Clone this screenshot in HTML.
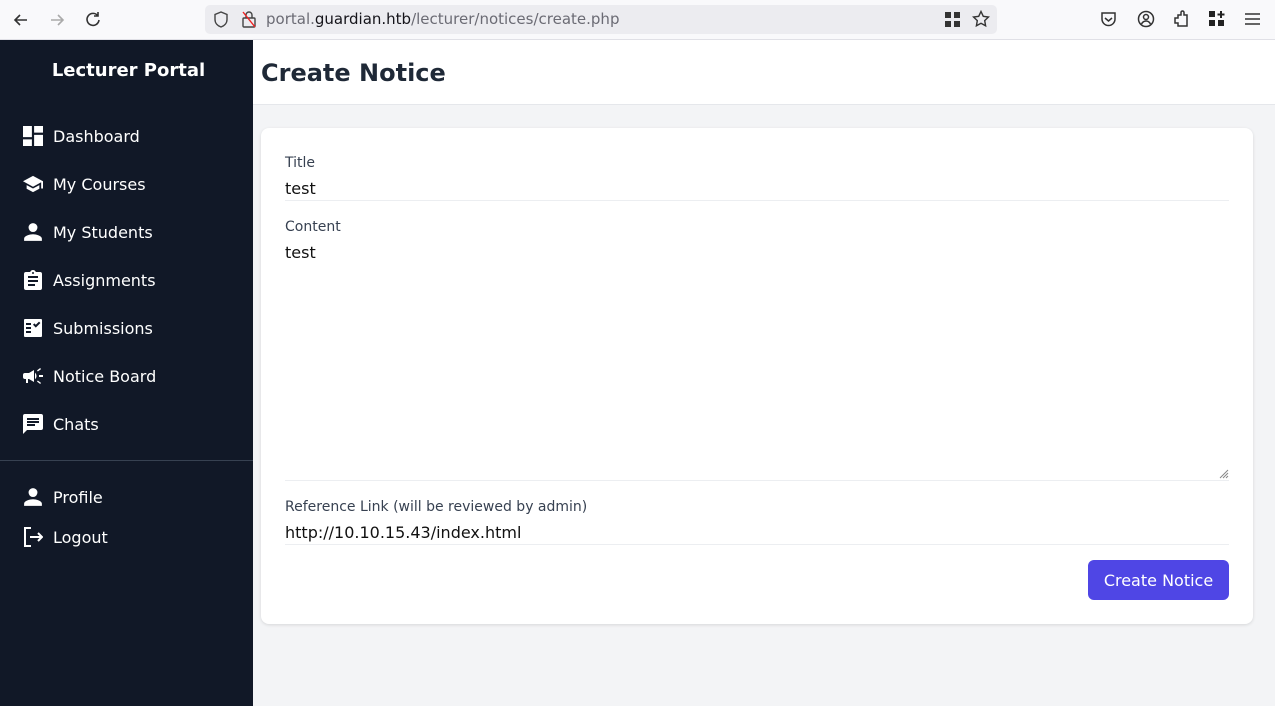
<!DOCTYPE html>
<html><head><meta charset="utf-8"><style>
*{box-sizing:border-box;margin:0;padding:0}
body{width:1275px;height:706px;overflow:hidden;font-family:"DejaVu Sans","Liberation Sans",sans-serif;background:#f3f4f6;position:relative}
.tb{position:absolute;left:0;top:0;width:1275px;height:40px;background:#f9f9fb;border-bottom:1px solid #e0e0e6}
.url{position:absolute;left:205px;top:5px;width:792px;height:29px;background:#ececf0;border-radius:5px;font-size:15px;color:#6b6b74;line-height:29px;padding-left:61px}
.url b{font-weight:normal;color:#15141a}
.side{position:absolute;left:0;top:40px;width:253px;height:666px;background:#111827;color:#fff}
.side h1{font-size:18px;font-weight:bold;text-align:center;position:absolute;top:20px;left:0;width:257px}
.it{position:absolute;left:23px;font-size:16px;display:flex;align-items:center}
.it svg{width:20px;height:20px;margin-right:10px;fill:#fff}
.hr{position:absolute;top:420px;left:0;width:253px;height:1px;background:#374151}
.hd{position:absolute;left:253px;top:40px;width:1022px;height:65px;background:#fff;border-bottom:1px solid #e5e7eb}
.hd h2{position:absolute;left:8px;top:19px;font-size:24px;font-weight:bold;color:#1f2937}
.card{position:absolute;left:261px;top:128px;width:992px;height:496px;background:#fff;border-radius:8px;box-shadow:0 1px 3px rgba(0,0,0,.12)}
.lbl{position:absolute;left:24px;font-size:14px;color:#374151}
.inp{position:absolute;left:24px;width:944px;font-size:16px;color:#111;border-bottom:1px solid #eceef1;padding-top:0}
.btn{position:absolute;left:827px;top:432px;width:141px;height:40px;background:#4f46e5;border-radius:6px;color:#fff;font-size:16px;text-align:center;line-height:41px}
</style></head><body>
<div class="tb">
<svg style="position:absolute;left:12px;top:11px" width="18" height="18" viewBox="0 0 18 18" fill="none" stroke="#333" stroke-width="1.6"><path d="M15 9H3M8 4L3 9l5 5"/></svg>
<svg style="position:absolute;left:48px;top:11px" width="18" height="18" viewBox="0 0 18 18" fill="none" stroke="#aaa" stroke-width="1.6"><path d="M3 9h12M10 4l5 5-5 5"/></svg>
<svg style="position:absolute;left:84px;top:10px" width="18" height="18" viewBox="0 0 18 18" fill="none" stroke="#333" stroke-width="1.6"><path d="M14 6A6 6 0 1 0 15 10M14 2v4h-4"/></svg>
<div class="url">portal.<b>guardian.htb</b>/lecturer/notices/create.php</div>
<svg style="position:absolute;left:213px;top:11px" width="16" height="17" viewBox="0 0 16 17" fill="none" stroke="#444" stroke-width="1.4"><path d="M8 1L2 3.5v5c0 4 3 6.5 6 7.5 3-1 6-3.5 6-7.5v-5z"/></svg>
<svg style="position:absolute;left:241px;top:10px" width="16" height="18" viewBox="0 0 16 18" fill="none" stroke="#444" stroke-width="1.4"><rect x="2" y="8" width="12" height="9" rx="1"/><path d="M5 8V5a3 3 0 0 1 6 0v3"/><path d="M2 2l12 15" stroke="#e22"/></svg>
<svg style="position:absolute;left:945px;top:12px" width="15" height="15" viewBox="0 0 15 15" fill="#333"><rect x="0" y="0" width="6" height="6"/><rect x="9" y="0" width="6" height="6"/><rect x="0" y="9" width="6" height="6"/><rect x="9" y="9" width="6" height="6"/></svg>
<svg style="position:absolute;left:972px;top:10px" width="18" height="18" viewBox="0 0 18 18" fill="none" stroke="#333" stroke-width="1.4"><path d="M9 1.5l2.3 4.8 5.2.7-3.8 3.6.9 5.2L9 13.3 4.4 15.8l.9-5.2L1.5 7l5.2-.7z"/></svg>
<svg style="position:absolute;left:1100px;top:11px" width="17" height="17" viewBox="0 0 17 17" fill="none" stroke="#333" stroke-width="1.5"><path d="M2 2h13v6a6.5 6.5 0 0 1-13 0z"/><path d="M5 7l3.5 3L12 7"/></svg>
<svg style="position:absolute;left:1137px;top:10px" width="18" height="18" viewBox="0 0 18 18" fill="none" stroke="#333" stroke-width="1.5"><circle cx="9" cy="9" r="7.5"/><circle cx="9" cy="7" r="2.5"/><path d="M4.5 14c1-2 2.5-3 4.5-3s3.5 1 4.5 3"/></svg>
<svg style="position:absolute;left:1173px;top:10px" width="17" height="18" viewBox="0 0 17 18" fill="none" stroke="#333" stroke-width="1.5"><path d="M2 8h3V5h3V2.5a1.5 1.5 0 0 1 3 0V5h3v11H5v-3H2z"/></svg>
<svg style="position:absolute;left:1209px;top:11px" width="16" height="16" viewBox="0 0 16 16" fill="#222"><rect x="0" y="0" width="6" height="6"/><rect x="0" y="9" width="6" height="6"/><rect x="9" y="9" width="6" height="6"/><path d="M11 0h2v2.5h2.5v2H13V7h-2V4.5H8.5v-2H11z"/></svg>
<svg style="position:absolute;left:1245px;top:12px" width="15" height="14" viewBox="0 0 15 14" stroke="#333" stroke-width="1.5"><path d="M0 2h15M0 7h15M0 12h15"/></svg>
</div>
<div class="side">
<h1>Lecturer Portal</h1>
<div class="it" style="top:86px"><svg viewBox="3 3 18 18"><path d="M3 13h8V3H3zm0 8h8v-6H3zm10 0h8V11h-8zm0-18v6h8V3z"/></svg>Dashboard</div>
<div class="it" style="top:134px"><svg viewBox="1 2 22 20"><path d="M5 13.2v4L12 21l7-3.8v-4L12 17zM12 3L1 9l11 6 9-4.9V17h2V9z"/></svg>My Courses</div>
<div class="it" style="top:182px"><svg viewBox="3 3 18 18"><path d="M12 12a4 4 0 1 0 0-8 4 4 0 0 0 0 8zm0 2c-2.7 0-8 1.3-8 4v2h16v-2c0-2.7-5.3-4-8-4z"/></svg>My Students</div>
<div class="it" style="top:230px"><svg viewBox="2 1 20 20"><path d="M19 3h-4.2C14.4 1.8 13.3 1 12 1s-2.4.8-2.8 2H5a2 2 0 0 0-2 2v14a2 2 0 0 0 2 2h14a2 2 0 0 0 2-2V5a2 2 0 0 0-2-2zm-7 0a1 1 0 1 1 0 2 1 1 0 0 1 0-2zm2 14H7v-2h7zm3-4H7v-2h10zm0-4H7V7h10z"/></svg>Assignments</div>
<div class="it" style="top:278px"><svg viewBox="2 2 20 20"><path d="M20 3H4a1 1 0 0 0-1 1v16a1 1 0 0 0 1 1h16a1 1 0 0 0 1-1V4a1 1 0 0 0-1-1zM10 17H5v-2h5zm0-4H5v-2h5zm0-4H5V7h5zm4.8 2.6l-2.8-2.8 1.4-1.4 1.4 1.4 3.2-3.2 1.4 1.4z"/></svg>Submissions</div>
<div class="it" style="top:326px"><svg viewBox="2 2 20 20"><path d="M18 11v2h4v-2zm-2 6.6c1 .7 2.2 1.6 3.2 2.4l.8-1.1-3.2-2.4zM20 5.1L19.2 4 16 6.4l.8 1.1c1-.7 2.2-1.6 3.2-2.4zM4 9a2 2 0 0 0-2 2v2a2 2 0 0 0 2 2h1v4h2v-4h1l5 3V6L8 9zm11.5 3c0-1.3-.6-2.5-1.5-3.4v6.7c.9-.8 1.5-2 1.5-3.3z"/></svg>Notice Board</div>
<div class="it" style="top:374px"><svg viewBox="2 2 20 20"><path d="M20 2H4a2 2 0 0 0-2 2v18l4-4h14a2 2 0 0 0 2-2V4a2 2 0 0 0-2-2zM6 9h12v2H6zm8 5H6v-2h8zm4-6H6V6h12z"/></svg>Chats</div>
<div class="hr"></div>
<div class="it" style="top:447px"><svg viewBox="3 3 18 18"><path d="M12 12a4 4 0 1 0 0-8 4 4 0 0 0 0 8zm0 2c-2.7 0-8 1.3-8 4v2h16v-2c0-2.7-5.3-4-8-4z"/></svg>Profile</div>
<div class="it" style="top:487px"><svg viewBox="2 2 20 20" fill="none" stroke="#fff" stroke-width="2" style="fill:none"><path d="M10 3H4v18h6M9 12h12M17 8l4 4-4 4"/></svg>Logout</div>
</div>
<div class="hd"><h2>Create Notice</h2></div>
<div class="card">
<div class="lbl" style="top:27px">Title</div>
<div class="inp" style="top:51px;height:22px">test</div>
<div class="lbl" style="top:91px">Content</div>
<div class="inp" style="top:115px;height:238px">test
<svg style="position:absolute;right:0;bottom:1px" width="10" height="10" viewBox="0 0 10 10" stroke="#888" stroke-width="1"><path d="M9 1L1 9M9 4L4 9M9 7L7 9"/></svg></div>
<div class="lbl" style="top:371px">Reference Link (will be reviewed by admin)</div>
<div class="inp" style="top:395px;height:22px">http://10.10.15.43/index.html</div>
<div class="btn">Create Notice</div>
</div>
</body></html>
